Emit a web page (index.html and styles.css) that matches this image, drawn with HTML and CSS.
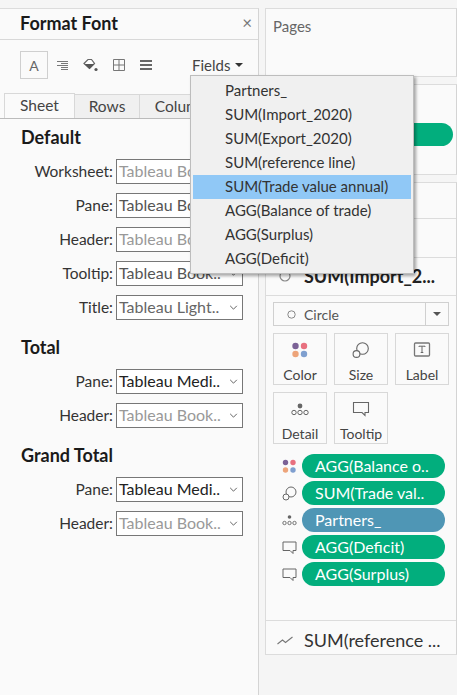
FILE: index.html
```html
<!DOCTYPE html>
<html lang="en">
<head>
    <meta charset="UTF-8">
    <title>Format Font</title>
    <link rel="stylesheet" href="styles.css">
</head>
<body>
    <div class="app">
        <div class="format-pane">
            <div class="pane-title">
                <h1>Format Font</h1>
                <span class="close">×</span>
            </div>
            <div class="toolbar">
                <span class="tool tool-font">A</span>
                <svg class="tool-icon" width="11" height="11" viewBox="0 0 11 11"><path d="M0 1.500h11M4 3.500h7M0 5.500h11M4 7.500h7M4 9.500h7" stroke="#777" fill="none"/></svg>
                <svg class="tool-icon" width="15" height="14" viewBox="0 0 15 14"><path d="M1 5.500l4-4h3.500l3 4-5 5z" fill="#fff" stroke="#666" stroke-width="1.200"/><path d="M1.500 6h10l-5 5z" fill="#555"/><circle cx="13" cy="11.500" r="1.600" fill="#555"/></svg>
                <svg class="tool-icon" width="12" height="12" viewBox="0 0 12 12"><path d="M.5.5h11v11H.5zM6 .5v11M.5 6h11" stroke="#777" fill="none"/></svg>
                <svg class="tool-icon" width="12" height="10" viewBox="0 0 12 10"><path d="M0 0h12v2H0zM0 4h12v2H0zM0 8h12v2H0z" fill="#666"/></svg>
                <span class="fields">Fields<i class="caret"></i></span>
            </div>
            <div class="tabs">
                <span class="tab tab-active">Sheet</span>
                <span class="tab tab-rows">Rows</span>
                <span class="tab tab-cols">Columns</span>
            </div>

            <h2 class="first">Default</h2>
            <div class="row"><label>Worksheet:</label><div class="select muted">Tableau Book..<svg class="chev" viewBox="0 0 10 6"><path d="M1 1l4 4 4-4" fill="none" stroke="#444"/></svg></div></div>
            <div class="row"><label>Pane:</label><div class="select">Tableau Book..<svg class="chev" viewBox="0 0 10 6"><path d="M1 1l4 4 4-4" fill="none" stroke="#444"/></svg></div></div>
            <div class="row"><label>Header:</label><div class="select muted">Tableau Book..<svg class="chev" viewBox="0 0 10 6"><path d="M1 1l4 4 4-4" fill="none" stroke="#444"/></svg></div></div>
            <div class="row"><label>Tooltip:</label><div class="select">Tableau Book..<svg class="chev" viewBox="0 0 10 6"><path d="M1 1l4 4 4-4" fill="none" stroke="#444"/></svg></div></div>
            <div class="row"><label>Title:</label><div class="select light">Tableau Light..<svg class="chev" viewBox="0 0 10 6"><path d="M1 1l4 4 4-4" fill="none" stroke="#444"/></svg></div></div>

            <h2>Total</h2>
            <div class="row"><label>Pane:</label><div class="select strong">Tableau Medi..<svg class="chev" viewBox="0 0 10 6"><path d="M1 1l4 4 4-4" fill="none" stroke="#444"/></svg></div></div>
            <div class="row"><label>Header:</label><div class="select muted">Tableau Book..<svg class="chev" viewBox="0 0 10 6"><path d="M1 1l4 4 4-4" fill="none" stroke="#444"/></svg></div></div>

            <h2>Grand Total</h2>
            <div class="row"><label>Pane:</label><div class="select strong">Tableau Medi..<svg class="chev" viewBox="0 0 10 6"><path d="M1 1l4 4 4-4" fill="none" stroke="#444"/></svg></div></div>
            <div class="row"><label>Header:</label><div class="select muted">Tableau Book..<svg class="chev" viewBox="0 0 10 6"><path d="M1 1l4 4 4-4" fill="none" stroke="#444"/></svg></div></div>
        </div>

        <div class="side">
            <div class="card card-pages"><span class="card-title">Pages</span></div>
            <div class="card card-filters"><span class="filter-pill"></span></div>
            <div class="card card-marks">
                <div class="marks-line line-all"></div>
                <div class="marks-line line-other"></div>
                <div class="marks-head">
                    <svg width="12" height="12" viewBox="0 0 12 12"><circle cx="6" cy="6" r="5" fill="none" stroke="#888" stroke-width="1.200"/></svg>
                    <b>SUM(Import_2...</b>
                </div>
                <div class="marks-body">
                    <div class="mark-type">
                        <span class="mark-type-name">
                            <svg width="9" height="9" viewBox="0 0 9 9"><circle cx="4.500" cy="4.500" r="3.700" fill="none" stroke="#888"/></svg>
                            Circle
                        </span>
                        <span class="mark-type-arrow"><i class="caret"></i></span>
                    </div>
                    <div class="shelf">
                        <div class="shelf-btn">
                            <svg width="18" height="16" viewBox="0 0 18 16"><circle cx="4.500" cy="4" r="3.200" fill="#7b6296"/><circle cx="13" cy="4" r="3.200" fill="#e8707f"/><circle cx="4.500" cy="12" r="3.200" fill="#eda47a"/><circle cx="13" cy="12" r="3.200" fill="#7f9fcf"/></svg>
                            Color
                        </div>
                        <div class="shelf-btn">
                            <svg width="18" height="16" viewBox="0 0 18 16"><circle cx="10.500" cy="6.500" r="5.800" fill="none" stroke="#666" stroke-width="1.100"/><circle cx="4.500" cy="12" r="3.400" fill="#fafafa" stroke="#666" stroke-width="1.100"/></svg>
                            Size
                        </div>
                        <div class="shelf-btn">
                            <svg width="18" height="16" viewBox="0 0 18 16"><rect x="1.500" y="1" width="15" height="13" rx="1" fill="none" stroke="#777" stroke-width="1.300"/><path d="M6 5V4.200h6V5M9 4.200v6M7.700 10.500h2.600" fill="none" stroke="#666"/></svg>
                            Label
                        </div>
                        <div class="shelf-btn">
                            <svg width="20" height="16" viewBox="0 0 20 16"><circle cx="10" cy="5" r="2.400" fill="#666"/><circle cx="4" cy="11.500" r="2.200" fill="none" stroke="#666"/><circle cx="10" cy="11.500" r="2.200" fill="none" stroke="#666"/><circle cx="16" cy="11.500" r="2.200" fill="none" stroke="#666"/></svg>
                            Detail
                        </div>
                        <div class="shelf-btn">
                            <svg width="18" height="16" viewBox="0 0 18 16"><path d="M1.500 1.500h15v10h-3.500v3l-3-3h-8.500z" fill="none" stroke="#666" stroke-width="1.100"/></svg>
                            Tooltip
                        </div>
                    </div>
                    <div class="pills">
                        <div class="pill-row">
                            <svg width="15" height="15" viewBox="0 0 15 15"><circle cx="3.500" cy="3.500" r="2.700" fill="#7b6296"/><circle cx="11" cy="3.500" r="2.700" fill="#e8707f"/><circle cx="3.500" cy="11" r="2.700" fill="#eda47a"/><circle cx="11" cy="11" r="2.700" fill="#7f9fcf"/></svg>
                            <span class="pill">AGG(Balance o..</span>
                        </div>
                        <div class="pill-row">
                            <svg width="15" height="15" viewBox="0 0 15 15"><circle cx="9" cy="6" r="5" fill="none" stroke="#666"/><circle cx="4" cy="11" r="3" fill="#fafafa" stroke="#666"/></svg>
                            <span class="pill">SUM(Trade val..</span>
                        </div>
                        <div class="pill-row">
                            <svg width="15" height="15" viewBox="0 0 15 15"><circle cx="7.500" cy="4" r="1.800" fill="#666"/><circle cx="2.500" cy="10" r="1.700" fill="none" stroke="#666" stroke-width=".9"/><circle cx="7.500" cy="10" r="1.700" fill="none" stroke="#666" stroke-width=".9"/><circle cx="12.500" cy="10" r="1.700" fill="none" stroke="#666" stroke-width=".9"/></svg>
                            <span class="pill pill-blue">Partners_</span>
                        </div>
                        <div class="pill-row">
                            <svg width="15" height="15" viewBox="0 0 15 15"><path d="M1 2h13v8.500h-3v3l-3-3H1z" fill="none" stroke="#666"/></svg>
                            <span class="pill">AGG(Deficit)</span>
                        </div>
                        <div class="pill-row">
                            <svg width="15" height="15" viewBox="0 0 15 15"><path d="M1 2h13v8.500h-3v3l-3-3H1z" fill="none" stroke="#666"/></svg>
                            <span class="pill">AGG(Surplus)</span>
                        </div>
                    </div>
                </div>
                <div class="marks-foot">
                    <svg width="16" height="9" viewBox="0 0 16 9"><path d="M.5 8l5-4 3 2.500L15.500 1" fill="none" stroke="#777" stroke-width="1.100"/></svg>
                    SUM(reference ...
                </div>
            </div>
        </div>
    </div>

    <!-- open Fields dropdown -->
    <ul class="menu">
        <li>Partners_</li>
        <li>SUM(Import_2020)</li>
        <li>SUM(Export_2020)</li>
        <li>SUM(reference line)</li>
        <li class="selected">SUM(Trade value annual)</li>
        <li>AGG(Balance of trade)</li>
        <li>AGG(Surplus)</li>
        <li>AGG(Deficit)</li>
    </ul>
</body>
</html>
```

FILE: styles.css
```css
html, body {
    margin: 0;
    height: 695px;
    overflow: hidden;
}
body {
    position: relative;
    background-color: #f5f5f5;
    font-family: "Lato", "Open Sans", sans-serif;
    font-size: 15px;
    color: #333;
}
.app {
    display: flex;
    padding-top: 8px;
    height: 687px;
}
svg {
    display: block;
    flex: none;
}

/* left format pane */
.format-pane {
    width: 258px;
    flex: none;
    background-color: #fafafa;
    border-top: 1px solid #dcdcdc;
    border-right: 1px solid #d4d4d4;
}
.pane-title {
    display: flex;
    align-items: center;
    justify-content: space-between;
    box-sizing: border-box;
    height: 31px;
    padding: 0 6px 3px 20px;
    border-bottom: 1px solid #d8d8d8;
}
h1 {
    margin: 0;
    font-size: 18px;
    font-weight: 700;
    color: #1a1a1a;
}
.close {
    font-size: 17px;
    color: #777;
}
.toolbar {
    display: flex;
    align-items: center;
    height: 28px;
    margin-top: 11px;
    padding-left: 20px;
}
.tool-font {
    display: flex;
    align-items: center;
    justify-content: center;
    width: 26px;
    height: 26px;
    border: 1px solid #cfcfcf;
    font-size: 14px;
    color: #666;
}
.tool-icon {
    margin-left: 15px;
}
.tool-font + .tool-icon {
    margin-left: 9px;
}
.fields {
    display: flex;
    align-items: center;
    margin-left: 40px;
    color: #444;
}
.caret {
    display: block;
    width: 0;
    height: 0;
    border: 4px solid transparent;
    border-top-color: #333;
    border-bottom: 0;
    margin-left: 5px;
}
.tabs {
    display: flex;
    align-items: flex-end;
    height: 26px;
    margin-top: 13px;
    padding-left: 4px;
    border-bottom: 1px solid #bbb;
    overflow: hidden;
    font-size: 15.5px;
}
.tab {
    box-sizing: border-box;
    height: 24px;
    line-height: 23px;
    background-color: #f0f0f0;
    border: 1px solid #d8d8d8;
    border-bottom: 0;
    border-left: 0;
    text-align: center;
    color: #444;
}
.tab-active {
    width: 71px;
    height: 26px;
    background-color: #fafafa;
    border-left: 1px solid #d8d8d8;
    position: relative;
    top: 1px;
}
.tab-rows {
    width: 65px;
}
.tab-cols {
    width: 90px;
}
h2 {
    margin: 16px 0 11px 21px;
    font-size: 18px;
    line-height: 22px;
    font-weight: 700;
    color: #1a1a1a;
}
h2.first {
    margin-top: 7px;
}
.row {
    display: flex;
    align-items: center;
    margin-bottom: 9px;
}
.row label {
    width: 113px;
    margin-right: 3px;
    padding-bottom: 2px;
    font-size: 15.5px;
    text-align: right;
}
.select {
    box-sizing: border-box;
    display: flex;
    align-items: center;
    justify-content: space-between;
    width: 127px;
    height: 25px;
    padding: 0 4px 2px 2px;
    border: 1px solid #777;
    background-color: #fff;
    font-size: 16px;
    color: #555;
    white-space: nowrap;
}
.chev {
    width: 9px;
    height: 5px;
    margin-top: 2px;
}
.muted {
    color: #999;
}
.light {
    color: #666;
}
.strong {
    color: #222;
}

/* right column */
.side {
    display: flex;
    flex-direction: column;
    gap: 7px;
    width: 192px;
    margin-left: 6px;
    flex: none;
}
.card {
    box-sizing: border-box;
    position: relative;
    background-color: #fafafa;
    border: 1px solid #dcdcdc;
    border-right-color: #d4d4d4;
}
.card-pages {
    height: 69px;
    padding: 8px 7px;
}
.card-title {
    color: #666;
}
.card-filters {
    display: flex;
    justify-content: flex-end;
    height: 91px;
    padding: 38px 3px 0 0;
}
.filter-pill {
    display: block;
    width: 172px;
    height: 23px;
    border-radius: 12px;
    background-color: #02ae7d;
}
.card-marks {
    height: 473px;
    padding-top: 74px;
}
.marks-line {
    position: absolute;
    left: 0;
    right: 0;
    height: 1px;
    background-color: #dcdcdc;
}
.line-all {
    top: 35px;
}
.line-other {
    top: 74px;
}
.marks-head {
    display: flex;
    align-items: center;
    gap: 13px;
    height: 38px;
    padding-left: 13px;
    border-bottom: 1px solid #dcdcdc;
    font-size: 18px;
    color: #222;
}
.marks-body {
    height: 318px;
    padding: 6px 7px 0;
}
.mark-type {
    box-sizing: border-box;
    display: flex;
    justify-content: space-between;
    width: 176px;
    height: 24px;
    border: 1px solid #d0d0d0;
    font-size: 14px;
    color: #555;
}
.mark-type-name {
    display: flex;
    align-items: center;
    gap: 8px;
    padding-left: 13px;
}
.mark-type-arrow {
    display: flex;
    align-items: center;
    justify-content: center;
    width: 22px;
    border-left: 1px solid #d0d0d0;
}
.mark-type-arrow .caret {
    margin: 0;
    border-top-color: #555;
}
.shelf {
    display: grid;
    grid-template-columns: repeat(3, 54px);
    gap: 7px;
    margin-top: 7px;
}
.shelf-btn {
    box-sizing: border-box;
    display: flex;
    flex-direction: column;
    align-items: center;
    height: 52px;
    padding-top: 8px;
    border: 1px solid #d8d8d8;
    font-size: 14px;
    line-height: 18px;
    color: #444;
    gap: 8px;
}
.pills {
    display: flex;
    flex-direction: column;
    gap: 3px;
    margin-top: 10px;
}
.pill-row {
    display: flex;
    align-items: center;
    gap: 6px;
    padding-left: 9px;
}
.pill-row svg {
    margin-right: -1px;
}
.pill {
    box-sizing: border-box;
    width: 143px;
    height: 24px;
    padding-left: 13px;
    line-height: 23px;
    border-radius: 12px;
    background-color: #02ae7d;
    color: #fff;
    font-size: 16px;
    white-space: nowrap;
}
.pill-blue {
    background-color: #4f96b5;
}
.marks-foot {
    display: flex;
    align-items: center;
    gap: 11px;
    height: 38px;
    padding-left: 11px;
    border-top: 1px solid #dcdcdc;
    font-size: 18px;
    color: #333;
}

/* Fields dropdown, sits over both columns */
.menu {
    position: absolute;
    left: 190px;
    top: 75px;
    width: 224px;
    margin: 0;
    padding: 3px 2px 2px;
    box-sizing: border-box;
    list-style: none;
    background-color: #f0f0f0;
    border: 1px solid #bdbdbd;
    box-shadow: 2px 2px 3px rgba(0,0,0,0.35);
}
.menu li {
    height: 24px;
    line-height: 23px;
    padding-left: 32px;
    color: #333;
    white-space: nowrap;
}
.menu .selected {
    background-color: #90c8f6;
}
```
